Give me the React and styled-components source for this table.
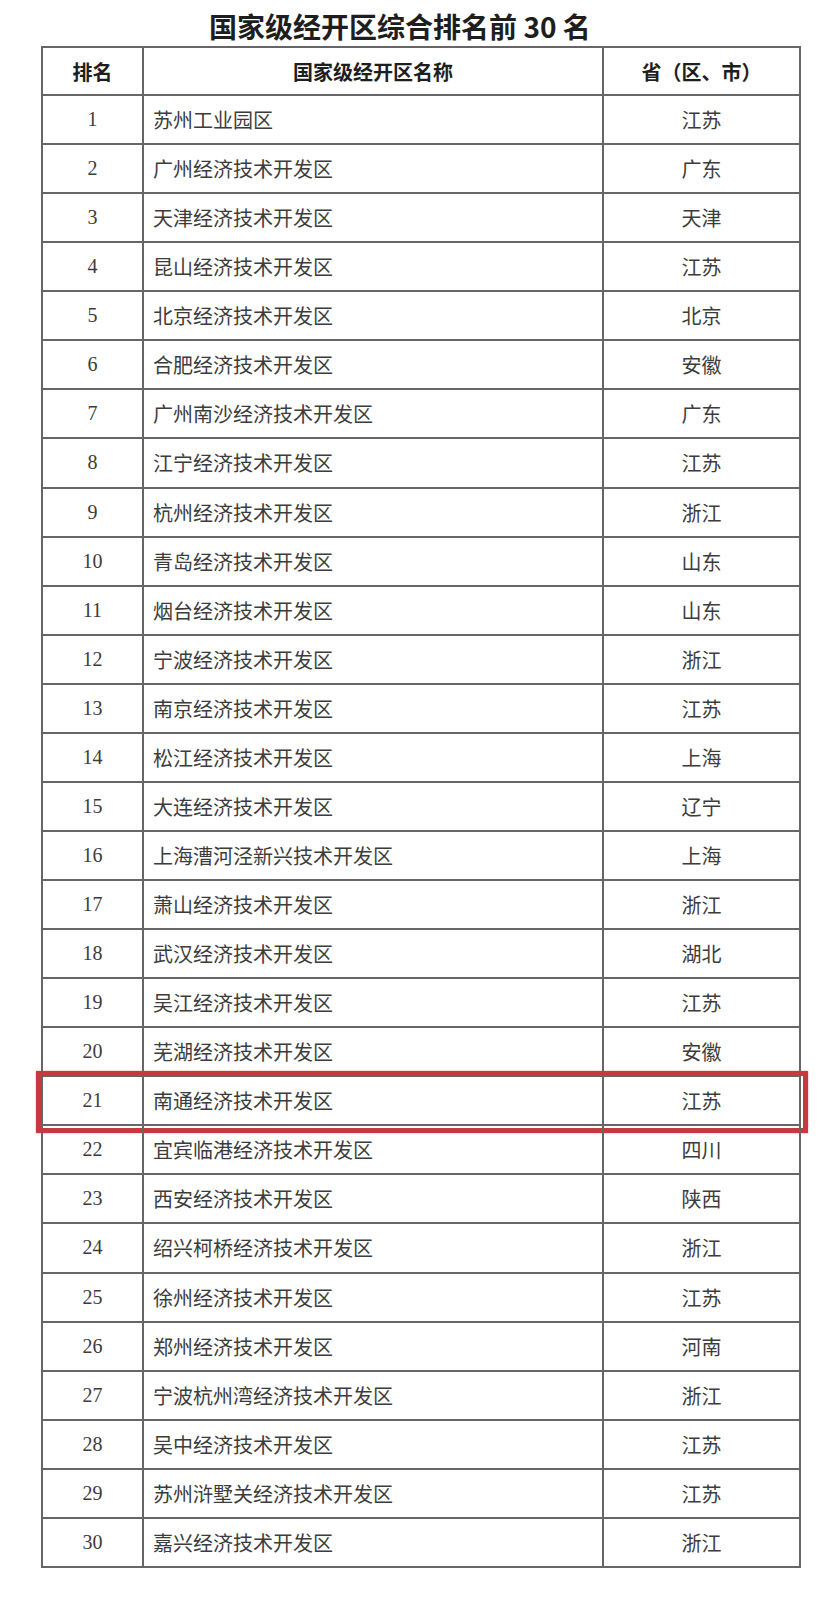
import React from "react";
import styled, { createGlobalStyle } from "styled-components";

const GlobalStyle = createGlobalStyle`
  html, body { margin: 0; padding: 0; background: #ffffff; }
  * { box-sizing: border-box; }
`;

const rows = [
  ["苏州工业园区", "江苏"],
  ["广州经济技术开发区", "广东"],
  ["天津经济技术开发区", "天津"],
  ["昆山经济技术开发区", "江苏"],
  ["北京经济技术开发区", "北京"],
  ["合肥经济技术开发区", "安徽"],
  ["广州南沙经济技术开发区", "广东"],
  ["江宁经济技术开发区", "江苏"],
  ["杭州经济技术开发区", "浙江"],
  ["青岛经济技术开发区", "山东"],
  ["烟台经济技术开发区", "山东"],
  ["宁波经济技术开发区", "浙江"],
  ["南京经济技术开发区", "江苏"],
  ["松江经济技术开发区", "上海"],
  ["大连经济技术开发区", "辽宁"],
  ["上海漕河泾新兴技术开发区", "上海"],
  ["萧山经济技术开发区", "浙江"],
  ["武汉经济技术开发区", "湖北"],
  ["吴江经济技术开发区", "江苏"],
  ["芜湖经济技术开发区", "安徽"],
  ["南通经济技术开发区", "江苏"],
  ["宜宾临港经济技术开发区", "四川"],
  ["西安经济技术开发区", "陕西"],
  ["绍兴柯桥经济技术开发区", "浙江"],
  ["徐州经济技术开发区", "江苏"],
  ["郑州经济技术开发区", "河南"],
  ["宁波杭州湾经济技术开发区", "浙江"],
  ["吴中经济技术开发区", "江苏"],
  ["苏州浒墅关经济技术开发区", "江苏"],
  ["嘉兴经济技术开发区", "浙江"],
];

const Page = styled.div`
  width: 828px;
  min-height: 1599px;
  background: #ffffff;
  padding-top: 6px;
`;

const Title = styled.h1`
  margin: 0;
  width: 800px;
  height: 40px;
  line-height: 40px;
  text-align: center;
  font-family: "Noto Sans CJK SC", "Noto Sans", sans-serif;
  font-size: 28px;
  font-weight: 700;
  color: #1e1e1e;
`;

const Table = styled.div`
  margin-left: 41px;
  width: 760px;
  border-top: 2px solid #666666;
  border-left: 2px solid #666666;
  display: flex;
  flex-direction: column;
`;

const Row = styled.div`
  position: relative;
  display: grid;
  grid-template-columns: 101px 460px 197px;
  height: ${(p) => (p.$header ? "48px" : "49.07px")};
  ${(p) =>
    p.$highlight &&
    `
    &::after {
      content: "";
      position: absolute;
      top: -6px;
      left: -7px;
      right: -7px;
      bottom: -7px;
      border: 5px solid #c53a3f;
      box-shadow: 0 0 1.5px rgba(197, 58, 63, 0.6);
      pointer-events: none;
    }
  `}
`;

const Cell = styled.div`
  display: flex;
  align-items: center;
  justify-content: ${(p) => (p.$align === "left" ? "flex-start" : "center")};
  padding-left: ${(p) => (p.$align === "left" ? "9px" : "0")};
  border-right: 2px solid #666666;
  border-bottom: 2px solid #666666;
  font-family: ${(p) =>
    p.$num
      ? `"Liberation Serif", "Times New Roman", serif`
      : `"Noto Sans CJK SC", "Noto Sans", sans-serif`};
  font-size: 20px;
  font-weight: ${(p) => (p.$header ? 700 : 400)};
  color: ${(p) => (p.$header ? "#1e1e1e" : "#3c3c3c")};
  white-space: nowrap;
`;

export default function App() {
  return (
    <Page>
      <GlobalStyle />
      <Title>国家级经开区综合排名前 30 名</Title>
      <Table>
        <Row $header>
          <Cell $header>排名</Cell>
          <Cell $header>国家级经开区名称</Cell>
          <Cell $header>省（区、市）</Cell>
        </Row>
        {rows.map(([name, prov], i) => (
          <Row key={i} $highlight={i === 20}>
            <Cell $num>{i + 1}</Cell>
            <Cell $align="left">{name}</Cell>
            <Cell>{prov}</Cell>
          </Row>
        ))}
      </Table>
    </Page>
  );
}
